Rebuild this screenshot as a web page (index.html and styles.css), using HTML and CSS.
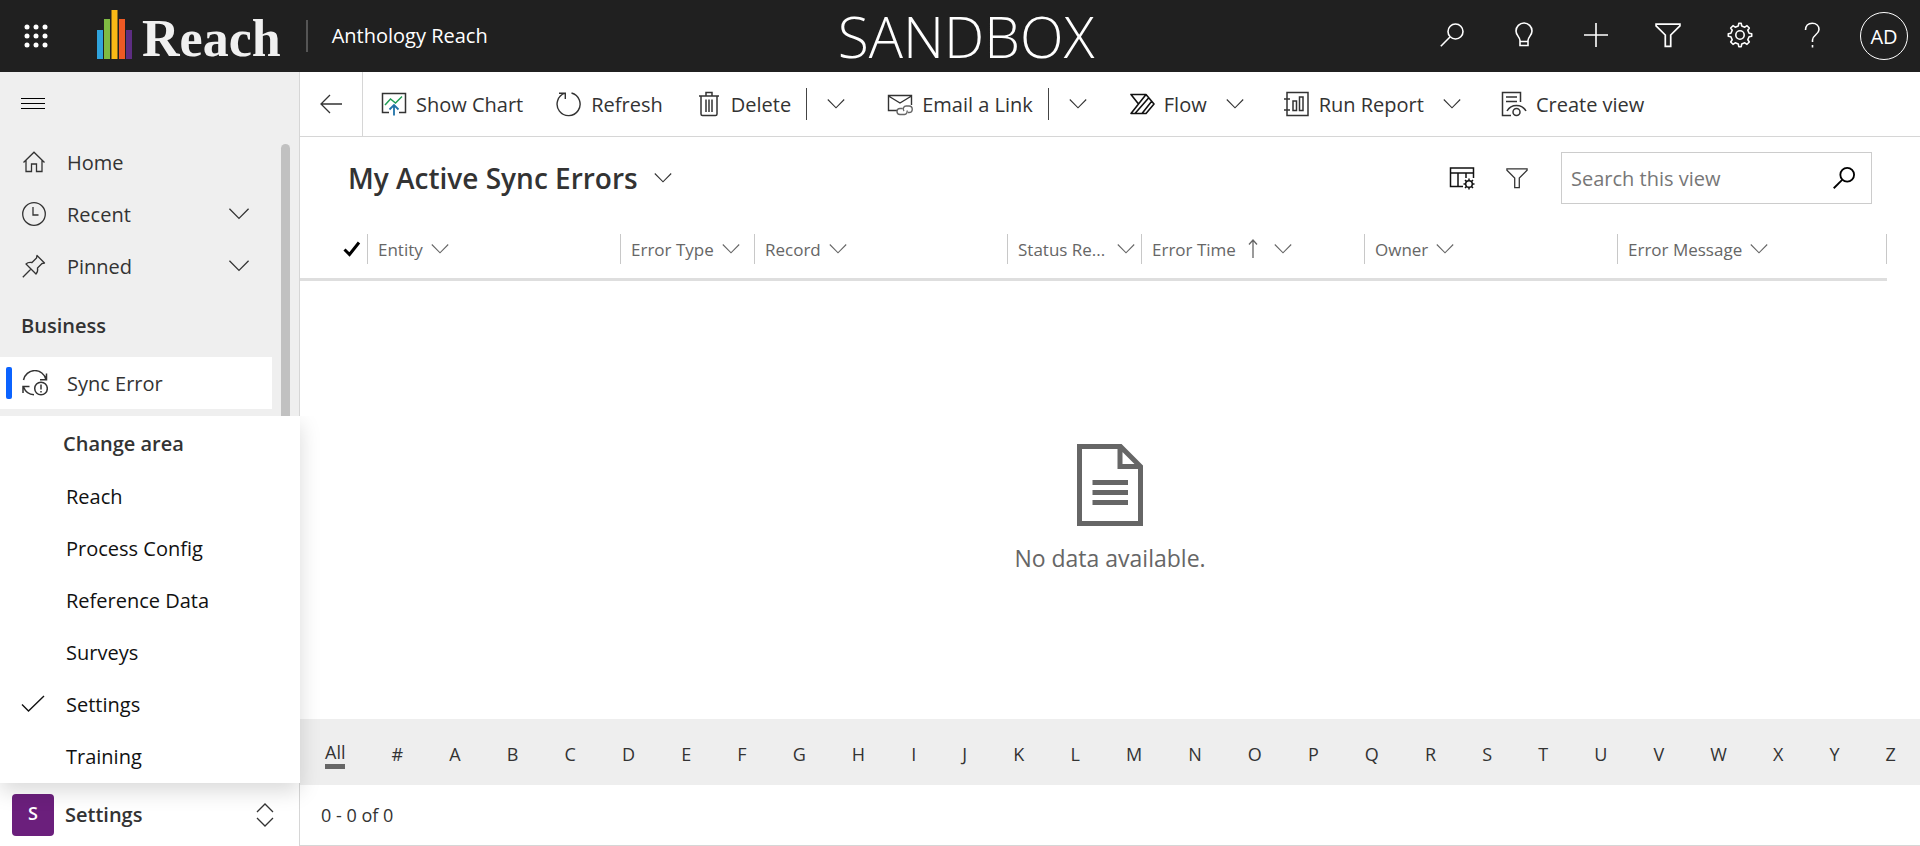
FILE: index.html
```html
<!DOCTYPE html>
<html lang="en">
<head>
<meta charset="utf-8">
<title>Sync Errors - Anthology Reach</title>
<link rel="stylesheet" href="styles.css">
</head>
<body>
<svg class="defs" aria-hidden="true">
  <symbol id="chev" viewBox="0 0 18 12"><path d="M.8 1.500L9 9.800L17.200 1.500" fill="none" stroke="currentColor" stroke-width="1.100"/></symbol>
  <symbol id="lens" viewBox="0 0 24 24"><g fill="none" stroke="currentColor"><circle cx="15.500" cy="8.500" r="7.500"/><path d="M10 14L.8 23.200"/></g></symbol>
  <symbol id="funnel" viewBox="0 0 24 24"><path d="M1 2H23V3.500L14.500 12V22.500H9.500V12L1 3.500Z" fill="none" stroke="currentColor"/></symbol>
</svg>
<div class="app">
  <header class="topbar">
    <div class="brand">
      <button class="waffle" aria-label="App launcher">
        <svg width="24" height="24" viewBox="0 0 24 24" fill="#fff"><circle cx="3" cy="3" r="2.500"/><circle cx="12" cy="3" r="2.500"/><circle cx="21" cy="3" r="2.500"/><circle cx="3" cy="12" r="2.500"/><circle cx="12" cy="12" r="2.500"/><circle cx="21" cy="12" r="2.500"/><circle cx="3" cy="21" r="2.500"/><circle cx="12" cy="21" r="2.500"/><circle cx="21" cy="21" r="2.500"/></svg>
      </button>
      <a class="logo" href="#">
        <svg width="36" height="50" viewBox="0 0 36 50"><path fill="#2fa3dc" d="M0 21h6v29H0z"/><path fill="#7fbb42" d="M7 10h6v40H7z"/><path fill="#f9b916" d="M14.500 1h6v49h-6z"/><path fill="#ee5a24" d="M22 10h6v40h-6z"/><path fill="#5d2d82" d="M29 21h6v29h-6z"/></svg>
        <span>Reach</span>
      </a>
      <a class="appname" href="#">Anthology Reach</a>
    </div>
    <div class="env">SANDBOX</div>
    <div class="tools">
      <button aria-label="Search"><svg width="24" height="24" stroke-width="1.600"><use href="#lens"/></svg></button>
      <button aria-label="Assistant"><svg width="24" height="26" viewBox="0 0 24 26" fill="none" stroke="currentColor" stroke-width="1.600"><path d="M8 18.500C8 15 4 13.500 4 9a8 8 0 0 1 16 0c0 4.500-4 6-4 9.500v5H8zM8 19.500h8"/></svg></button>
      <button aria-label="New"><svg width="26" height="26" viewBox="0 0 26 26" fill="none" stroke="currentColor" stroke-width="1.600"><path d="M13 1v24M1 13h24"/></svg></button>
      <button aria-label="Advanced find"><svg width="26" height="26" stroke-width="1.600"><use href="#funnel"/></svg></button>
      <button aria-label="Settings"><svg width="26" height="26" viewBox="0 0 26 26" fill="none" stroke="currentColor" stroke-width="1.600" stroke-linejoin="round"><circle cx="13" cy="13" r="4.200"/><path d="M11.300 3.900L11.800 1.300H14.200L14.700 3.900L17.800 5.200L20 3.700L22.300 6L20.800 8.200L22.100 11.300L24.700 11.800V14.200L22.100 14.700L20.800 17.800L22.300 20L20 22.300L17.800 20.800L14.700 22.100L14.200 24.700H11.800L11.300 22.100L8.200 20.800L6 22.300L3.700 20L5.200 17.800L3.900 14.700L1.300 14.200V11.800L3.900 11.300L5.200 8.200L3.700 6L6 3.700L8.200 5.200Z"/></svg></button>
      <button aria-label="Help"><svg width="24" height="26" viewBox="0 0 24 26" fill="none" stroke="currentColor" stroke-width="1.600"><path d="M5.500 8c0-4 2.600-6.800 6.700-6.800S19 3.800 19 7.500c0 5-6.500 5.500-6.500 10.500v2M12.500 23v2.500"/></svg></button>
      <button class="account" aria-label="Account"><span class="avatar">AD</span></button>
    </div>
  </header>

  <aside class="side">
    <button class="burger" aria-label="Collapse site map"><svg width="24" height="12" viewBox="0 0 24 12" stroke="#000" stroke-width="1"><path d="M0 1.500h24M0 6.500h24M0 11.500h24"/></svg></button>
    <nav class="nav">
      <a href="#"><svg width="24" height="24" viewBox="0 0 24 24" fill="none" stroke="currentColor" stroke-width="1.300"><path d="M1.500 12.500L12 2.200L22.500 12.500M4 10.500V21.500H9.500V14H14.500V21.500H20V10.500"/></svg><span>Home</span></a>
      <a href="#"><svg width="24" height="24" viewBox="0 0 24 24" fill="none" stroke="currentColor" stroke-width="1.300"><circle cx="12" cy="12" r="11.300"/><path d="M11 5v8h5.500"/></svg><span>Recent</span><svg class="chevron" width="24" height="14"><use href="#chev"/></svg></a>
      <a href="#"><svg width="24" height="24" viewBox="0 0 24 24" fill="none" stroke="currentColor" stroke-width="1.300" stroke-linejoin="round"><path d="M15 1.500L22.500 9L20 9.500L15.500 14C16 16.500 15.500 18.500 14 20L4 10C5.500 8.500 7.500 8 10 8.500L14.500 4ZM9 15L.8 23.200"/></svg><span>Pinned</span><svg class="chevron" width="24" height="14"><use href="#chev"/></svg></a>
      <h2>Business</h2>
      <a class="current" href="#"><svg width="26" height="26" viewBox="0 0 26 26" fill="none" stroke="currentColor" stroke-width="1.500"><path d="M1.500 10A11.500 11.500 0 0 1 24 9.500M24.500 3.500V9.800H18M1 23V16.500H7.500M1.500 17C3.500 22 7 24.500 12 24.800"/><circle cx="19" cy="18.500" r="6.300"/><path d="M19 14.500v5M19 21v1.500"/></svg><span>Sync Error</span></a>
    </nav>
    <div class="scroll"></div>
    <div class="switcher">
      <div class="menu">
        <h2>Change area</h2>
        <button>Reach</button>
        <button>Process Config</button>
        <button>Reference Data</button>
        <button>Surveys</button>
        <button class="checked"><svg width="24" height="18" viewBox="0 0 24 18" fill="none" stroke="currentColor" stroke-width="1.400"><path d="M1 9.500L7.500 16L23 1"/></svg>Settings</button>
        <button>Training</button>
      </div>
      <button class="area"><span class="tile">S</span><span>Settings</span><svg width="18" height="24" viewBox="0 0 18 24" fill="none" stroke="#333" stroke-width="1.300"><path d="M1 9L9 1L17 9M1 15L9 23L17 15"/></svg></button>
    </div>
  </aside>

  <main class="main">
    <div class="commands">
      <button class="back" aria-label="Back"><svg width="22" height="20" viewBox="0 0 22 20" fill="none" stroke="currentColor" stroke-width="1.300"><path d="M22 10H1M10 1L1 10L10 19"/></svg></button>
      <button class="cmd"><svg width="26" height="24" viewBox="0 0 26 24" fill="none" stroke="currentColor" stroke-width="1.500"><path d="M8 20.500H1.500V1.500H24.500V20.500H18"/><path stroke="#1f9d55" d="M4 13L9.500 7L14.500 11L21 4.500"/><path stroke="#2072a8" stroke-width="1.800" d="M13 23.500V13.500M8.500 17.500L13 13L17.500 17.500"/></svg>Show Chart</button>
      <button class="cmd"><svg width="26" height="26" viewBox="0 0 26 26" fill="none" stroke="currentColor" stroke-width="1.400"><path d="M15.500 2A11.500 11.500 0 1 1 9 2.200M3 2.200H9.300V8"/></svg>Refresh</button>
      <button class="cmd"><svg width="26" height="26" viewBox="0 0 26 26" fill="none" stroke="currentColor" stroke-width="1.500"><path d="M3 5H23M10 4.500V1.500H16V4.500M5 5V23Q5 24.500 6.500 24.500H19.500Q21 24.500 21 23V5M10 8.500V21M13 8.500V21M16 8.500V21"/></svg>Delete</button>
      <button class="drop split" aria-label="More delete commands"><svg width="18" height="12"><use href="#chev"/></svg></button>
      <button class="cmd"><svg width="26" height="24" viewBox="0 0 26 24" fill="none" stroke="currentColor" stroke-width="1.400"><path d="M10 18.500H1.500V3.500H24.500V13M1.500 4L13 11L24.500 4"/><path stroke="#666" d="M15.500 16.500H13a3 3 0 0 0 0 6h4.500a3 3 0 0 0 2.500-4M17 19a3 3 0 0 1 2.500-5H22a3.200 3.200 0 0 1 0 6.500h-1"/></svg>Email a Link</button>
      <button class="drop split" aria-label="More link commands"><svg width="18" height="12"><use href="#chev"/></svg></button>
      <button class="cmd"><svg width="26" height="22" viewBox="0 0 26 22" fill="none" stroke="#111" stroke-width="1.600" stroke-linejoin="round"><path d="M2 1.500H17L25 11L17 20.500H2L9.500 11ZM9.500 11L17 1.500M6 20.500L20 4.500M13 20.500L22.500 8.500"/></svg>Flow</button>
      <button class="drop plain" aria-label="Flow commands"><svg width="18" height="12"><use href="#chev"/></svg></button>
      <button class="cmd"><svg width="26" height="26" viewBox="0 0 26 26" fill="none" stroke="currentColor" stroke-width="1.500"><path d="M3 8V1.500H24V24.500H3V19M3 8V19M0 8H6M0 19H6M9 10h3.500v9.500H9zM15.500 6h3.500v13.500h-3.500z"/></svg>Run Report</button>
      <button class="drop plain" aria-label="Report commands"><svg width="18" height="12"><use href="#chev"/></svg></button>
      <button class="cmd"><svg width="26" height="26" viewBox="0 0 26 26" fill="none" stroke="currentColor" stroke-width="1.500"><path d="M10 24.500H1.500V1.500H19.500V11M5 6H16M5 10.500H16M6 20C8 16.500 11.500 14.500 15.500 14.500S23 16.500 25 20"/><circle cx="15.500" cy="21" r="3.500"/></svg>Create view</button>
    </div>
    <div class="viewbar">
      <h1><button>My Active Sync Errors<svg width="18" height="12"><use href="#chev"/></svg></button></h1>
      <button class="tool" aria-label="Edit columns"><svg width="26" height="24" viewBox="0 0 26 24" fill="none" stroke="#111" stroke-width="1.500"><path d="M14 20.500H1.500V2H24.500V12M1.500 7H24.500M9 7V20.500M17 7V12"/><circle cx="20" cy="18" r="3.300"/><path d="M20 12.500v2M20 21.500v2M14.500 18h2M23.500 18h2M16 14l1.500 1.500M22.500 20.500L24 22M24 14l-1.500 1.500M16 22l1.500-1.500"/></svg></button>
      <button class="tool" aria-label="Edit filters"><svg width="24" height="22" stroke-width="1.400"><use href="#funnel"/></svg></button>
      <div class="search">
        <input type="text" placeholder="Search this view" aria-label="Search this view">
        <button aria-label="Start search"><svg width="22" height="22" stroke="#000" stroke-width="2"><use href="#lens"/></svg></button>
      </div>
    </div>
    <table class="grid">
      <colgroup><col class="c-check"><col class="c-wide"><col class="c-small"><col class="c-wide"><col class="c-small"><col class="c-time"><col class="c-wide"><col></colgroup>
      <thead><tr>
        <th><svg width="18" height="16" viewBox="0 0 18 16" fill="none" stroke="#000" stroke-width="3"><path d="M1.500 8.500L6.500 13.500L16 1.500"/></svg></th>
        <th><button>Entity<svg width="18" height="12"><use href="#chev"/></svg></button></th>
        <th><button>Error Type<svg width="18" height="12"><use href="#chev"/></svg></button></th>
        <th><button>Record<svg width="18" height="12"><use href="#chev"/></svg></button></th>
        <th><button class="wide">Status Re...<svg width="18" height="12"><use href="#chev"/></svg></button></th>
        <th><button class="sorted">Error Time<svg width="10" height="20" viewBox="0 0 10 20" fill="none" stroke="currentColor" stroke-width="1.300"><path d="M5 19V1M1 5.500L5 1L9 5.500"/></svg><svg width="18" height="12"><use href="#chev"/></svg></button></th>
        <th><button>Owner<svg width="18" height="12"><use href="#chev"/></svg></button></th>
        <th><button>Error Message<svg width="18" height="12"><use href="#chev"/></svg></button></th>
      </tr></thead>
    </table>
    <div class="empty">
      <svg width="66" height="82" viewBox="0 0 66 82" fill="none" stroke="#666" stroke-width="5"><path d="M2.500 2.500H43.500L63.500 22.500V79.500H2.500ZM43 2.500V22.500H63.500M15.500 38.500H51M15.500 48.500H51M15.500 58.500H51"/></svg>
      <p>No data available.</p>
    </div>
    <div class="letters">
      <button class="on">All</button><button>#</button><button>A</button><button>B</button><button>C</button><button>D</button><button>E</button><button>F</button><button>G</button><button>H</button><button>I</button><button>J</button><button>K</button><button>L</button><button>M</button><button>N</button><button>O</button><button>P</button><button>Q</button><button>R</button><button>S</button><button>T</button><button>U</button><button>V</button><button>W</button><button>X</button><button>Y</button><button>Z</button>
    </div>
    <footer class="status">0 - 0 of 0</footer>
  </main>
</div>
</body>
</html>
```
FILE: styles.css
```css
* { box-sizing: border-box; }
body { margin: 0; font-family: "Open Sans", "Noto Sans", sans-serif; font-size: 20px; color: #333; background: #fff; }
button { font: inherit; color: inherit; background: none; border: 0; padding: 0; cursor: pointer; white-space: nowrap; }
a { color: inherit; text-decoration: none; }
h1, h2, p { margin: 0; }
svg { display: block; flex: none; }
.defs { position: absolute; width: 0; height: 0; }

.app { display: grid; grid-template: 72px 1fr / 300px 1fr; min-height: 100vh; }

.topbar { grid-column: 1 / -1; display: grid; grid-template-columns: 1fr auto 1fr; align-items: center; background: #202020; color: #fff; }
.brand { display: flex; align-items: center; height: 72px; }
.waffle { padding: 0 24px; }
.logo { display: flex; align-items: flex-end; gap: 9px; margin-left: 25px; padding-bottom: 4px; }
.logo span { font: bold 52px/40px "Liberation Serif", serif; color: #f0f0f0; }
.appname { margin-left: 25px; padding-left: 24px; border-left: 2px solid #555; line-height: 32px; }
.env { padding-left: 12px; font-size: 57px; line-height: 72px; font-weight: 300; }
.tools { display: flex; justify-content: flex-end; }
.tools button { width: 72px; height: 72px; display: flex; justify-content: center; align-items: center; padding-bottom: 3px; }
.tools .account { padding-bottom: 0; }
.avatar { width: 48px; height: 48px; border: 1px solid #fff; border-radius: 50%; line-height: 48px; font-size: 20px; }

.side { position: relative; z-index: 1; display: flex; flex-direction: column; background: #efefef; border-right: 1px solid #d6d6d6; }
.burger { align-self: flex-start; padding: 25px 21px; }
.nav { display: flex; flex-direction: column; width: 272px; padding-top: 2px; }
.nav a { display: flex; align-items: center; height: 52px; padding: 0 21px 0 22px; }
.nav span { margin-left: 21px; }
.nav .chevron { margin-left: auto; }
.nav h2 { padding: 3px 0 0 21px; font-size: 20px; line-height: 62px; font-weight: 600; }
.nav .current { position: relative; background: #fff; }
.nav .current span { margin-left: 19px; }
.nav .current::before { content: ""; position: absolute; left: 6px; top: 10px; bottom: 10px; width: 6px; border-radius: 2px; background: #0b63ff; }
.scroll { position: absolute; top: 72px; bottom: 60px; right: 9px; width: 9px; border-radius: 5px; background: #c1c1c1; }
.switcher { position: relative; margin-top: auto; background: #fff; }
.menu { position: absolute; left: 0; right: -1px; bottom: 100%; display: flex; flex-direction: column; padding: 2px 0 1px; background: #fff; color: #111; box-shadow: 0 8px 20px rgba(0, 0, 0, .15); clip-path: inset(0 -24px -28px 0); }
.menu h2 { padding-left: 63px; font-size: 20px; line-height: 52px; font-weight: 600; color: #333; }
.menu button { display: flex; align-items: center; height: 52px; padding-left: 66px; }
.menu .checked { gap: 21px; padding-left: 21px; }
.area { display: flex; align-items: center; width: 100%; height: 63px; padding: 0 25px 0 12px; font-weight: 600; }
.area svg { margin-left: auto; }
.tile { width: 42px; height: 42px; margin-right: 11px; border-radius: 4px; background: #6b1f7c; color: #fff; font-size: 18px; line-height: 38px; }

.main { display: flex; flex-direction: column; min-width: 0; border-bottom: 1px solid #d6d6d6; }
.commands { display: flex; align-items: stretch; height: 65px; border-bottom: 1px solid #d6d6d6; }
.back { padding: 0 20px; border-right: 1px solid #d6d6d6; }
.cmd { display: flex; align-items: center; gap: 9px; padding-left: 18px; margin-right: 15px; }
.drop { display: flex; align-items: center; padding-right: 24px; }
.plain { padding: 0 22px 0 4px; }
.split::before { content: ""; width: 1px; height: 32px; margin-right: 20px; background: #444; }
.viewbar { display: flex; align-items: center; padding: 15px 48px 15px 48px; }
.viewbar h1 { margin-right: auto; font-size: 28px; font-weight: 600; line-height: 52px; }
.viewbar h1 button { display: flex; align-items: center; gap: 16px; }
.tool { margin-right: 30px; }
.tool + .tool { margin-right: 32px; }
.search { display: flex; align-items: center; width: 311px; height: 52px; padding: 0 16px 0 9px; border: 1px solid #ccc; }
.search input { flex: 1; min-width: 0; padding: 0; border: 0; outline: 0; background: none; font: inherit; }
.search button { color: #000; }
.search input::placeholder { color: #777; opacity: 1; }

.grid { width: calc(100% - 33px); table-layout: fixed; border-collapse: collapse; border-bottom: 3px solid #dedede; color: #666; font-size: 17px; }
.grid th { height: 60px; padding: 2px 0 0; font-weight: 400; text-align: left; }
.grid th > svg { margin-left: 43px; }
.grid button { display: flex; align-items: center; gap: 8px; width: 100%; height: 30px; padding-left: 10px; border-left: 1px solid #c8c8c8; }
.grid .wide { gap: 12px; }
.grid .sorted { gap: 12px; }
.grid .sorted svg + svg { margin-left: 4px; }
.grid th:last-child button { border-right: 1px solid #c8c8c8; }
.c-check { width: 67px; }
.c-wide { width: 253px; }
.c-small { width: 134px; }
.c-time { width: 223px; }

.empty { flex: 1; display: flex; flex-direction: column; align-items: center; justify-content: center; gap: 14px; padding-top: 20px; color: #666; }
.empty p { font-size: 23px; line-height: 36px; }
.letters { display: flex; justify-content: space-between; align-items: center; height: 66px; padding: 4px 24px 0 25px; background: #eee; font-size: 18px; }
.letters .on { border-bottom: 5px solid #666; line-height: 24px; }
.status { padding: 0 21px; font-size: 18px; line-height: 60px; }
```
